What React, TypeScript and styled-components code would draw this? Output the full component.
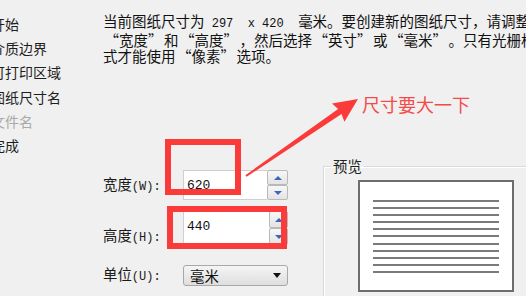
import React from "react"
import styled, { createGlobalStyle } from "styled-components"

const GlobalStyle = createGlobalStyle`
  html, body {
    margin: 0;
    padding: 0;
    background: #f0f0f0;
  }
  body {
    width: 526px;
    height: 296px;
    overflow: hidden;
    font-family: "Noto Sans CJK SC", sans-serif;
  }
`

const Window = styled.div`
  position: relative;
  display: flex;
  width: 526px;
  height: 296px;
  overflow: hidden;
  background: #f0f0f0;
`

const Sidebar = styled.ul`
  flex: 0 0 112px;
  margin: 0 0 0 -9px;
  padding: 12px 0 0;
  list-style: none;
`

const Step = styled.li<{ $disabled?: boolean }>`
  font-size: 14px;
  line-height: 24.2px;
  white-space: nowrap;
  color: ${(p) => (p.$disabled ? "#a9a9a9" : "#1e1e1e")};
`

const Main = styled.div`
  flex: 1;
  min-width: 0;
  display: flex;
  flex-direction: column;
  padding-top: 13px;
`

const Intro = styled.p`
  margin: 0;
  font-size: 14.5px;
  line-height: 16px;
  white-space: nowrap;
  color: #111;
`

const Quote = styled.span<{ $close?: boolean }>`
  display: inline-block;
  width: 16px;
  overflow: hidden;
  vertical-align: top;
  text-align: ${(p) => (p.$close ? "left" : "right")};
`

const Latin = styled.span<{ $size?: number }>`
  font-family: "Liberation Mono", monospace;
  font-size: ${(p) => p.$size ?? 12}px;
  white-space: pre;
`

const Body = styled.div`
  display: flex;
  align-items: flex-start;
  margin-top: 94px;
`

const Form = styled.div`
  flex: 0 0 220px;
  display: flex;
  flex-direction: column;
  padding-top: 12px;
`

const FieldRow = styled.div<{ $gap?: number }>`
  display: flex;
  align-items: center;
  margin-top: ${(p) => p.$gap ?? 0}px;
`

const Label = styled.label<{ $shift?: number }>`
  flex: 0 0 80px;
  position: relative;
  top: ${(p) => p.$shift ?? 0}px;
  font-size: 14.4px;
  line-height: 16px;
  color: #1a1a1a;
  white-space: nowrap;
`

const SpinBox = styled.div<{ $h: number }>`
  display: flex;
  height: ${(p) => p.$h}px;
`

const Field = styled.div<{ $w: number }>`
  box-sizing: border-box;
  width: ${(p) => p.$w}px;
  height: 100%;
  padding: 3px 0 0 3px;
  background: #fff;
  border: 1px solid #cfcfcf;
  border-right: none;
  line-height: 16px;
  color: #111;
`

const SpinButtons = styled.div<{ $w: number }>`
  display: flex;
  flex-direction: column;
  width: ${(p) => p.$w}px;
`

const SpinButton = styled.div`
  flex: 1;
  display: flex;
  align-items: center;
  justify-content: center;
  box-sizing: border-box;
  border: 1px solid #b9b9b9;
  border-radius: 2px;
  background: linear-gradient(#f7f7f7, #e4e4e4);
`

const Tri = styled.span<{ $down?: boolean }>`
  width: 0;
  height: 0;
  border-left: 4px solid transparent;
  border-right: 4px solid transparent;
  ${(p) =>
    p.$down
      ? "border-top: 4px solid #3d67b8;"
      : "border-bottom: 4px solid #3d67b8;"}
`

const Select = styled.div`
  box-sizing: border-box;
  width: 105px;
  height: 21px;
  display: flex;
  align-items: center;
  justify-content: space-between;
  padding: 0 6px 0 6px;
  border: 1px solid #a8a8a8;
  border-radius: 3px;
  background: linear-gradient(#f5f5f5, #dedede);
  font-size: 14.4px;
  color: #111;
`

const Caret = styled.span`
  width: 0;
  height: 0;
  border-left: 4px solid transparent;
  border-right: 4px solid transparent;
  border-top: 5px solid #111;
`

const Group = styled.fieldset`
  flex: 0 0 auto;
  width: 240px;
  height: 200px;
  margin: 0;
  padding: 0;
  border: 1px solid #d6dadd;
  box-shadow: inset 1px 1px 0 #fff;
`

const Legend = styled.legend`
  margin-left: 7px;
  padding: 0 2px;
  font-size: 14.4px;
  line-height: 16px;
  color: #222;
`

const Paper = styled.div`
  box-sizing: border-box;
  width: 156px;
  height: 112px;
  margin: 6px 0 0 34px;
  padding: 18px 0 0 13px;
  background: #fff;
  border: 2px solid #6d6d6d;
  display: flex;
  flex-direction: column;
  gap: 5.1px;
`

const PaperLine = styled.div`
  width: 126px;
  height: 2px;
  background: #7a7a7a;
`

const Overlay = styled.svg`
  position: absolute;
  inset: 0;
  pointer-events: none;
`

const RedBox = styled.div<{ $x: number; $y: number; $w: number; $h: number }>`
  position: absolute;
  left: ${(p) => p.$x}px;
  top: ${(p) => p.$y}px;
  width: ${(p) => p.$w}px;
  height: ${(p) => p.$h}px;
  box-sizing: border-box;
  border: 6px solid #fb3a3a;
`

const Note = styled.div`
  position: absolute;
  left: 362px;
  top: 93px;
  font-size: 18px;
  line-height: 22px;
  color: #f34a4a;
  white-space: nowrap;
`

const steps = ["开始", "介质边界", "可打印区域", "图纸尺寸名", "文件名", "完成"]

const Q = ({ children }: { children: React.ReactNode }) => (
  <>
    <Quote>“</Quote>
    {children}
    <Quote $close>”</Quote>
  </>
)

export default function App() {
  return (
    <Window lang="zh-CN">
      <GlobalStyle />
      <Sidebar>
        {steps.map((s) => (
          <Step key={s} $disabled={s === "文件名"}>
            {s}
          </Step>
        ))}
      </Sidebar>
      <Main>
        <Intro>
          当前图纸尺寸为<Latin> 297  x 420  </Latin>毫米。要创建新的图纸尺寸，请调整
          <br />
          <Q>宽度</Q>和<Q>高度</Q>，然后选择<Q>英寸</Q>或<Q>毫米</Q>。只有光栅格
          <br />
          式才能使用<Q>像素</Q>选项。
        </Intro>
        <Body>
          <Form>
            <FieldRow>
              <Label>
                宽度<Latin>(W):</Latin>
              </Label>
              <SpinBox $h={30}>
                <Field $w={84}>
                  <Latin $size={13}>620</Latin>
                </Field>
                <SpinButtons $w={21}>
                  <SpinButton>
                    <Tri />
                  </SpinButton>
                  <SpinButton>
                    <Tri $down />
                  </SpinButton>
                </SpinButtons>
              </SpinBox>
            </FieldRow>
            <FieldRow $gap={11}>
              <Label $shift={8}>
                高度<Latin>(H):</Latin>
              </Label>
              <SpinBox $h={34}>
                <Field $w={86}>
                  <Latin $size={13}>440</Latin>
                </Field>
                <SpinButtons $w={19}>
                  <SpinButton>
                    <Tri />
                  </SpinButton>
                  <SpinButton>
                    <Tri $down />
                  </SpinButton>
                </SpinButtons>
              </SpinBox>
            </FieldRow>
            <FieldRow $gap={20}>
              <Label>
                单位<Latin>(U):</Latin>
              </Label>
              <Select>
                毫米
                <Caret />
              </Select>
            </FieldRow>
          </Form>
          <Group>
            <Legend>预览</Legend>
            <Paper>
              {Array.from({ length: 11 }, (_, i) => (
                <PaperLine key={i} />
              ))}
            </Paper>
          </Group>
        </Body>
      </Main>

      <RedBox $x={165} $y={139} $w={76} $h={56} />
      <RedBox $x={167} $y={206} $w={120} $h={43} />
      <Overlay width={526} height={296} viewBox="0 0 526 296">
        <polygon
          points="245.4,175.2 338.1,109 332,103.5 358,99 344.4,121.7 341.5,114 246.6,176.8"
          fill="#fb3a3a"
        />
      </Overlay>
      <Note>尺寸要大一下</Note>
    </Window>
  )
}
